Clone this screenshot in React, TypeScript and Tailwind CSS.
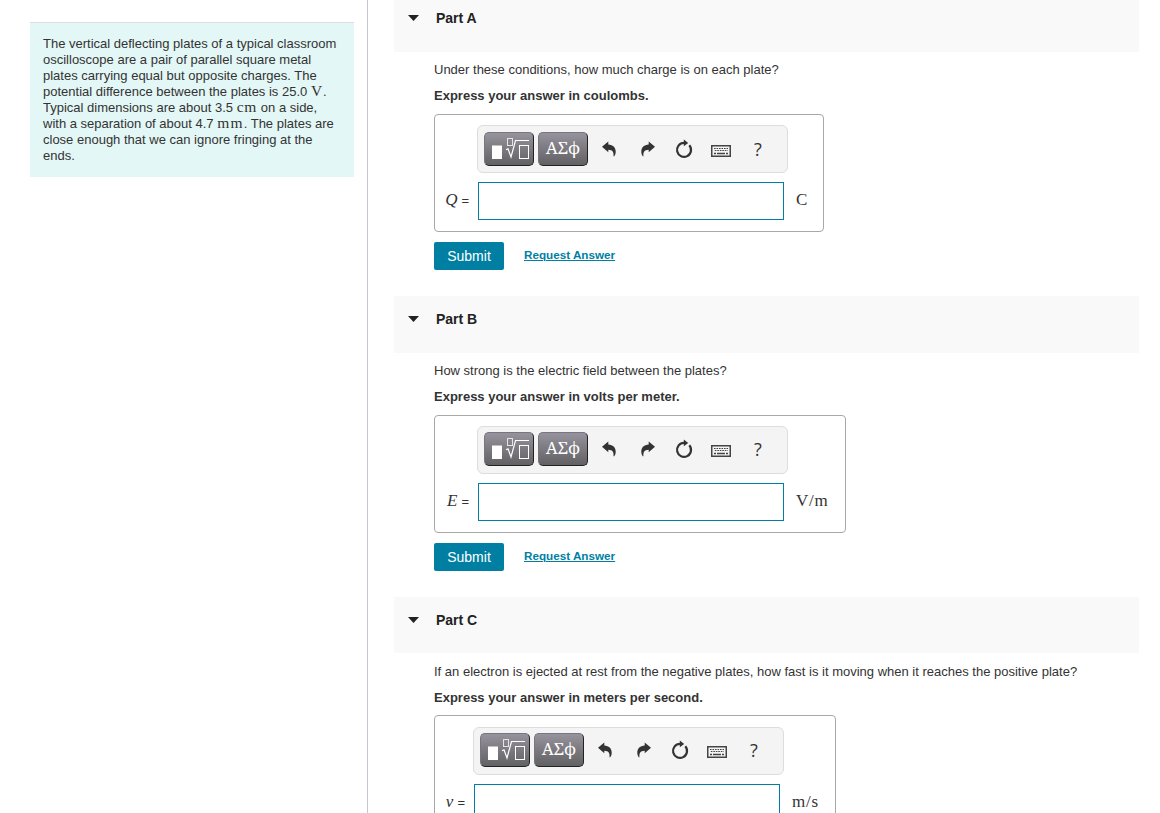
import React from 'react';

interface PartProps {
  title: string;
  question: string;
  instruction: string;
  variable: string;
  unit: string;
  headerClass: string;
  questionClass: string;
  boxClass: string;
  labelClass: string;
  toolbarClass: string;
  actions?: boolean;
}

const serif = "font-['Liberation_Serif',serif]";
const inlineUnit = "font-['Liberation_Serif',serif] text-[15.5px] leading-[0]";

const TemplateIcon = () => (
  <svg className="shrink-0" width="42" height="24" viewBox="0 0 42 24" fill="none">
    <rect x="4" y="8.500" width="10" height="13.500" fill="#fff" />
    <rect x="19.5" y="1.5" width="5" height="7" stroke="#e4e4e6" />
    <path d="M18 12.800l2-1 3 8.200L27.500 3.500H41" stroke="#fff" strokeWidth="1.2" />
    <rect x="31.5" y="8.5" width="9" height="13" stroke="#fff" />
  </svg>
);

const UndoIcon = ({ className = '' }: { className?: string }) => (
  <svg className={className} width="14" height="16" viewBox="0 0 14 16" fill="#333">
    <path d="M0 5.700L6.300.500v3c4.500.300 7.400 2.800 7.400 7 0 2-.500 3.600-1.500 4.800h-.7c.4-4-.7-6.300-5.200-6.500v2.500z" />
  </svg>
);

const ResetIcon = () => (
  <svg width="18" height="20" viewBox="0 0 18 20" fill="none">
    <path d="M10 3.900H9A7 7 0 1 0 14.300 6.300" stroke="#333" strokeWidth="2.200" />
    <path d="M8.800.500l4.400 3.400-4.400 3.400z" fill="#333" />
  </svg>
);

const KeyboardIcon = () => (
  <svg width="20" height="12" viewBox="0 0 20 12" fill="none">
    <rect x=".75" y=".75" width="18.5" height="10.5" stroke="#444" strokeWidth="1.5" />
    <path d="M3 3.500h14M3.800 5.500h13" stroke="#444" strokeWidth="1.200" strokeDasharray="1.6 .9" />
    <path d="M3 8.500h2M6 8.500h8M15 8.500h2" stroke="#444" strokeWidth="1.300" />
  </svg>
);

const mathButton =
  'flex h-[34px] w-[50px] items-center justify-center rounded-[5px] border border-t-[#77757d] border-l-[#77757d] border-r-[#222] border-b-[#222] bg-linear-to-b from-[#96939d] to-[#626163]';

const Toolbar = ({ className }: { className: string }) => (
  <div className={`flex h-12 w-[311px] rounded-md border border-[#ddd] bg-[#f4f4f4] pl-1.5 ${className}`}>
    <button className={mathButton}>
      <TemplateIcon />
    </button>
    <button
      className={`${mathButton} ml-1 pb-0.5 font-['Noto_Serif','DejaVu_Serif_Condensed','DejaVu_Serif',serif] text-[17px] text-white`}
    >
      ΑΣϕ
    </button>
    <button className="mt-[9px] ml-3.5 h-4">
      <UndoIcon />
    </button>
    <button className="mt-[9px] ml-[25px] h-4">
      <UndoIcon className="-scale-x-100" />
    </button>
    <button className="mt-[7px] ml-5 h-5">
      <ResetIcon />
    </button>
    <button className="mt-[13px] ml-[18px] h-3">
      <KeyboardIcon />
    </button>
    <button className="mt-[5px] ml-[23px] h-6 font-['Open_Sans',sans-serif] text-lg leading-6 text-[#333]">
      ?
    </button>
  </div>
);

const Part: React.FC<PartProps> = ({
  title,
  question,
  instruction,
  variable,
  unit,
  headerClass,
  questionClass,
  boxClass,
  labelClass,
  toolbarClass,
  actions = true,
}) => {
  return (
    <section className="ml-[26px] w-[745px]">
      <div className={`flex items-start bg-[#f9f9f9] pl-3.5 ${headerClass}`}>
        <svg className="mt-5" width="11" height="6" viewBox="0 0 11 6">
          <path d="M0 0h11L5.500 6z" fill="#222" />
        </svg>
        <h2 className="mt-[15px] ml-[17px] text-sm leading-4 font-bold text-[#222]">{title}</h2>
      </div>
      <div className="pl-10">
        <p className={`text-[13px] leading-4 ${questionClass}`}>{question}</p>
        <p className="pt-2.5 text-[13px] leading-4 font-bold">{instruction}</p>
        <div className={`h-[118px] rounded border border-[#a8a8a8] ${boxClass}`}>
          <div className={`flex flex-col ${labelClass}`}>
            <Toolbar className={toolbarClass} />
            <div className="mt-[9px] flex items-center">
              <label className={`-ml-8 flex w-8 items-baseline justify-end pr-2 pb-px ${serif} text-[17px] leading-5`}>
                <span className="italic">{variable}</span>
                <span className="ml-1 font-['Liberation_Sans',sans-serif] text-[13px]">=</span>
              </label>
              <input className="ml-px h-[38px] w-[306px] border border-[#007fa3] bg-white outline-none" />
              <span className={`ml-3 pb-0.5 ${serif} text-[17px] tracking-[0.8px]`}>{unit}</span>
            </div>
          </div>
        </div>
        {actions && (
          <div className="mt-2.5 flex h-7 items-center">
            <button className="h-7 w-[70px] rounded-[2px] bg-[#007fa3] text-sm text-white">Submit</button>
            <a className="ml-5 pb-0.5 text-[11.7px] font-bold text-[#007fa3] underline">Request Answer</a>
          </div>
        )}
      </div>
    </section>
  );
};

const App: React.FC = () => {
  return (
    <div className="flex h-[813px] w-[1160px] overflow-hidden bg-white font-['Liberation_Sans',sans-serif] text-[#333]">
      <aside className="w-[368px] shrink-0 border-r border-[#c4c8d2] pt-[22px] pl-[30px]">
        <div className="h-[155px] w-[324px] border-t border-[#ddd] bg-[#e3f7f6] pt-[13px] pl-[13px] text-[13px] leading-4 whitespace-nowrap">
          The vertical deflecting plates of a typical classroom
          <br />
          oscilloscope are a pair of parallel square metal
          <br />
          plates carrying equal but opposite charges. The
          <br />
          potential difference between the plates is 25.0 <span className={`${inlineUnit} tracking-[0.8px]`}>V</span>.
          <br />
          Typical dimensions are about 3.5 <span className={`${inlineUnit} tracking-[0.8px]`}>cm</span> on a side,
          <br />
          with a separation of about 4.7 <span className={`${inlineUnit} tracking-[1.2px]`}>mm</span>. The plates are
          <br />
          close enough that we can ignore fringing at the
          <br />
          ends.
        </div>
      </aside>
      <main className="flex flex-col gap-[26px]">
        <Part
          title="Part A"
          question="Under these conditions, how much charge is on each plate?"
          instruction="Express your answer in coulombs."
          variable="Q"
          unit="C"
          headerClass="h-[57px] -mt-[5px]"
          questionClass="pt-2.5"
          boxClass="mt-2.5 w-[390px] pt-2.5"
          labelClass="pl-[42px]"
          toolbarClass="pt-1.5"
        />
        <Part
          title="Part B"
          question="How strong is the electric field between the plates?"
          instruction="Express your answer in volts per meter."
          variable="E"
          unit="V/m"
          headerClass="h-[57px]"
          questionClass="pt-2.5"
          boxClass="mt-2.5 w-[412px] pt-2.5"
          labelClass="pl-[42px]"
          toolbarClass="pt-[5px]"
        />
        <Part
          title="Part C"
          question="If an electron is ejected at rest from the negative plates, how fast is it moving when it reaches the positive plate?"
          instruction="Express your answer in meters per second."
          variable="v"
          unit="m/s"
          headerClass="h-14"
          questionClass="pt-[11px]"
          boxClass="mt-[9px] w-[402px] pt-[11px]"
          labelClass="pl-[38px]"
          toolbarClass="pt-[5px]"
          actions={false}
        />
      </main>
    </div>
  );
};

export default App;
